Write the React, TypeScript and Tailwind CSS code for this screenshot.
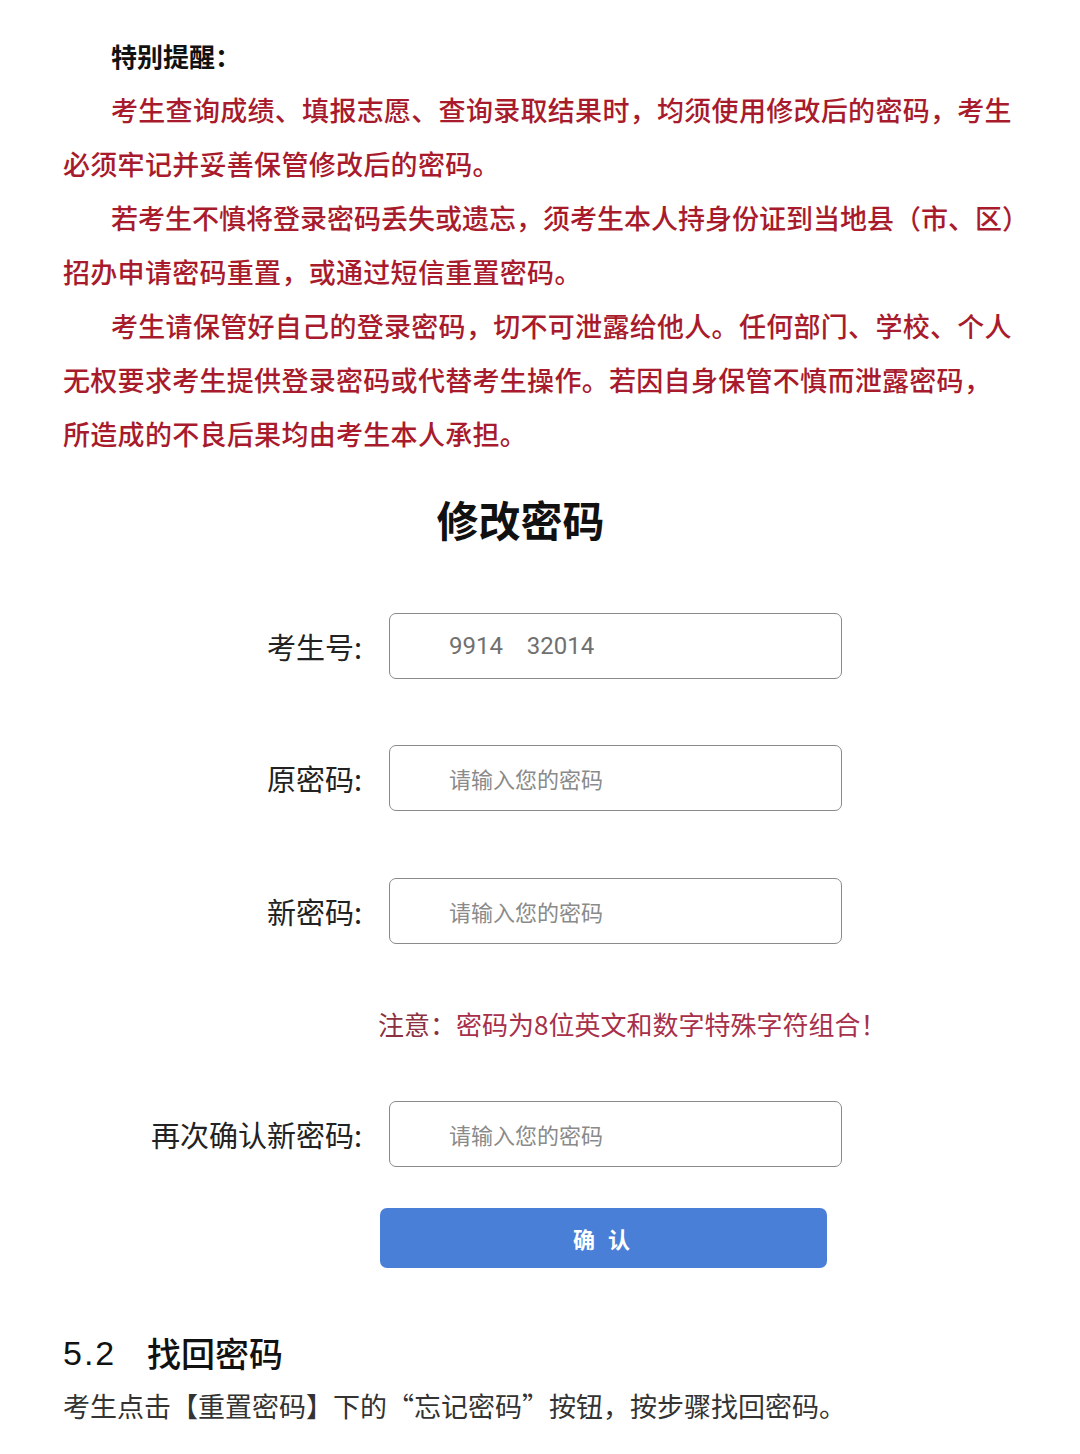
import React from "react";

const cjk = { fontFamily: '"Noto Sans CJK SC", "Noto Sans", sans-serif' };

const notice: { text: string; indent?: boolean; tight?: boolean }[] = [
  { text: "考生查询成绩、填报志愿、查询录取结果时，均须使用修改后的密码，考生", indent: true },
  { text: "必须牢记并妥善保管修改后的密码。" },
  { text: "若考生不慎将登录密码丢失或遗忘，须考生本人持身份证到当地县（市、区）", indent: true, tight: true },
  { text: "招办申请密码重置，或通过短信重置密码。" },
  { text: "考生请保管好自己的登录密码，切不可泄露给他人。任何部门、学校、个人", indent: true },
  { text: "无权要求考生提供登录密码或代替考生操作。若因自身保管不慎而泄露密码，" },
  { text: "所造成的不良后果均由考生本人承担。" },
];

function FieldRow({ label, value, placeholder }: { label: string; value?: string; placeholder?: string }) {
  return (
    <div className="flex items-center">
      <div className="w-[362px] text-right text-[29px] text-[#222] leading-none">{label}</div>
      <div className="ml-[27px] flex h-[66px] w-[453px] items-center rounded-[7px] border-[1.5px] border-[#8a8a8a] pl-[59px]">
        {value ? (
          <span className="text-[24px] text-[#707070] whitespace-pre" style={{ fontFamily: 'Roboto, "Noto Sans CJK SC", sans-serif' }}>
            {value}
          </span>
        ) : (
          <span className="text-[22px] text-[#8a8a8a]">{placeholder}</span>
        )}
      </div>
    </div>
  );
}

export default function App() {
  return (
    <div className="min-h-[1454px] w-[1080px] bg-white pt-[29px]" style={cjk}>
      {/* notice */}
      <div className="px-[63px]">
        <div className="pl-[48px] text-[26px] font-bold leading-[54px] text-[#111]">特别提醒：</div>
        {notice.map((l, i) => (
          <div
            key={i}
            className={`whitespace-nowrap text-[27px] font-medium leading-[54px] text-[#a81b2c] ${l.tight ? "tracking-[0px]" : "tracking-[0.3px]"} ${l.indent ? "pl-[48px]" : ""}`}
          >
            {l.text}
          </div>
        ))}
      </div>

      {/* form */}
      <div className="mt-[28px] pr-[39px] text-center text-[42px] font-bold leading-[60px] text-[#111]">修改密码</div>

      <div className="mt-[64px] flex flex-col">
        <FieldRow label="考生号:" value="9914    32014" />
        <div className="mt-[66px]">
          <FieldRow label="原密码:" placeholder="请输入您的密码" />
        </div>
        <div className="mt-[67px]">
          <FieldRow label="新密码:" placeholder="请输入您的密码" />
        </div>
        <div className="mt-[62px] pl-[378px] text-[26px] leading-[36px] text-[#a8304a]">
          <span className="text-[#8c3040]">注意：</span>密码为8位英文和数字特殊字符组合！
        </div>
        <div className="mt-[59px]">
          <FieldRow label="再次确认新密码:" placeholder="请输入您的密码" />
        </div>
        <div className="mt-[41px] pl-[380px]">
          <button className="flex h-[60px] w-[447px] items-center justify-center rounded-[7px] bg-[#4a7fd8] text-[22px] font-bold tracking-[4px] text-white">
            确 认
          </button>
        </div>
      </div>

      {/* section 5.2 */}
      <div className="mt-[63px] px-[63px]">
        <div className="flex items-center text-[34px] leading-[44px] text-[#111]">
          <span className="w-[84px] text-[34px] tracking-[2px]" style={{ fontFamily: '"Liberation Sans", sans-serif' }}>
            5.2
          </span>
          <span className="font-medium">找回密码</span>
        </div>
        <div className="mt-[11px] whitespace-nowrap text-[27px] leading-[40px] text-[#333]">
          考生点击【重置密码】下的“忘记密码”按钮，按步骤找回密码。
        </div>
      </div>
    </div>
  );
}
